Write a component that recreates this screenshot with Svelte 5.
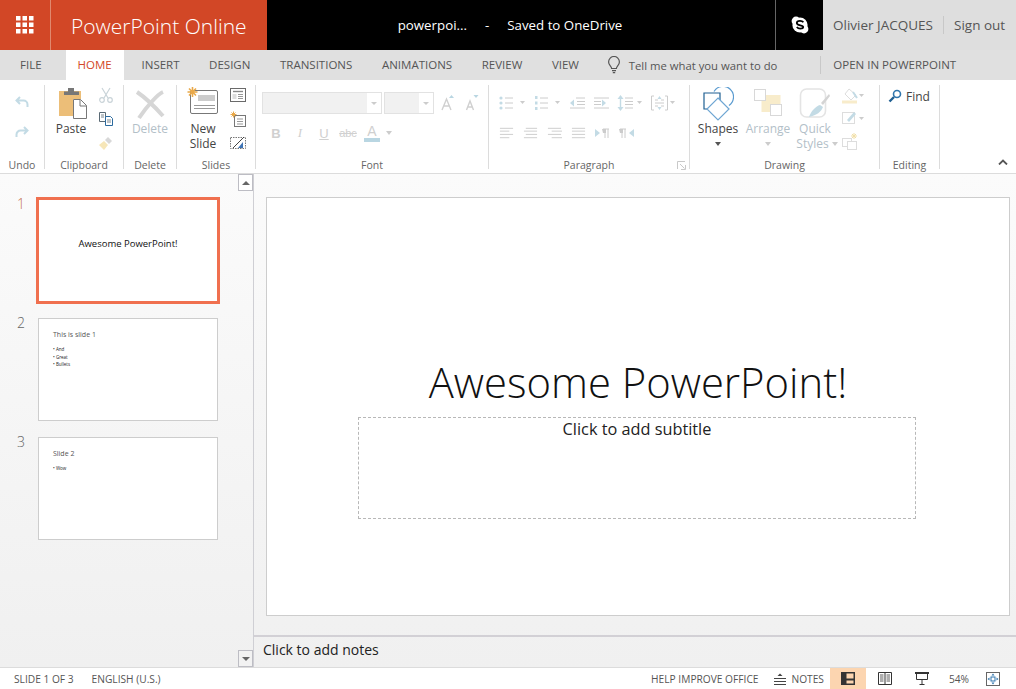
<script>
	const tabs = ['INSERT', 'DESIGN', 'TRANSITIONS', 'ANIMATIONS', 'REVIEW', 'VIEW'];
	const slides = [
		{ n: 1, title: 'Awesome PowerPoint!', bullets: [] },
		{ n: 2, title: 'This is slide 1', bullets: ['And', 'Great', 'Bullets'] },
		{ n: 3, title: 'Slide 2', bullets: ['Wow'] }
	];
	const alignLines = [
		[1, 14, 1, 10, 1, 14, 1, 10],
		[3, 12, 1, 14, 3, 12, 1, 14],
		[1, 14, 5, 14, 1, 14, 5, 14],
		[1, 14, 1, 14, 1, 14, 1, 14]
	];
</script>

<div class="app">
	<header class="topbar">
		<div class="brand">
			<div class="waffle">
				<svg width="18" height="18" viewBox="0 0 18 18" fill="#fff">
					{#each [0, 6.5, 13] as y}
						{#each [0, 6.5, 13] as x}
							<rect {x} {y} width="4.5" height="4.5" />
						{/each}
					{/each}
				</svg>
			</div>
			<div class="appname">PowerPoint Online</div>
		</div>
		<div class="docname">
			<span>powerpoi...</span>
			<span class="dash">-</span>
			<span>Saved to OneDrive</span>
		</div>
		<div class="skype">
			<svg width="18" height="18" viewBox="0 0 18 18">
				<circle cx="5" cy="5" r="4.4" fill="#fff" />
				<circle cx="13" cy="13" r="4.4" fill="#fff" />
				<circle cx="9" cy="9" r="7.6" fill="#fff" />
				<path d="M12.4 6.3C11.6 5.2 10.4 4.8 9 4.8c-1.8 0-3.2.9-3.2 2.3 0 3 6.4 1.6 6.4 4 0 1-1.2 1.6-3 1.6-1.5 0-2.6-.6-3.4-1.7" fill="none" stroke="#000" stroke-width="1.8" />
			</svg>
		</div>
		<div class="user">
			<span>Olivier JACQUES</span>
			<span class="signout">Sign out</span>
		</div>
	</header>

	<nav class="tabs">
		<span class="tab file">FILE</span>
		<span class="tab home">HOME</span>
		{#each tabs as t}
			<span class="tab">{t}</span>
		{/each}
		<span class="tell">
			<svg width="14" height="18" viewBox="0 0 14 18" fill="none" stroke="#555" stroke-width="1.2">
				<path d="M4.6 12.5c0-2.2-3-3.4-3-6.6a5.4 5.4 0 0 1 10.8 0c0 3.2-3 4.4-3 6.6z" />
				<path d="M5 14.6h4M5.8 16.6h2.4" />
			</svg>
			<span>Tell me what you want to do</span>
		</span>
		<span class="tab open">OPEN IN POWERPOINT</span>
	</nav>

	<section class="ribbon">
		<div class="group undo">
			<div class="body col-icons">
				<svg width="16" height="16" viewBox="0 0 16 16" fill="none" stroke="#c3dbe5" stroke-width="2">
					<path d="M6 3 2.500 6.500 6 10M3 6.500h6.500a4 4 0 0 1 4 4V13" />
				</svg>
				<svg width="16" height="16" viewBox="0 0 16 16" fill="none" stroke="#c3dbe5" stroke-width="2">
					<path d="M10 3l3.500 3.500L10 10M13 6.500H6.500a4 4 0 0 0-4 4V13" />
				</svg>
			</div>
			<div class="glabel">Undo</div>
		</div>

		<div class="group clipboard">
			<div class="body">
				<div class="big paste">
					<svg width="32" height="34" viewBox="0 0 32 34">
						<path d="M4 4h22v8h-8v17H4z" fill="#ecbe78" />
						<path d="M9 8V4.500h4V1h6v3.500h5V8z" fill="#777" />
						<path d="M18.500 12.500h7l6 6v13h-13z" fill="#fff" stroke="#777" />
						<path d="M25 12.500v6.500h6.500" fill="none" stroke="#777" />
					</svg>
					<span>Paste</span>
				</div>
				<div class="small-col">
					<svg width="16" height="16" viewBox="0 0 16 16" fill="none" stroke="#c9d3d8" stroke-width="1.200">
						<path d="M4 1l6 10M12 1 6 11" />
						<circle cx="4" cy="13" r="2.300" />
						<circle cx="12" cy="13" r="2.300" />
					</svg>
					<svg width="16" height="16" viewBox="0 0 16 16" fill="#fff" stroke="#5a6a75">
						<path d="M1.500 1.500h6v9h-6z" />
						<path d="M7.500 5.500h5l2 2v7h-7z" stroke="#2b6a9e" />
						<path d="M3 4h3M3 6h3M9 9h4M9 11h4" stroke-width=".8" />
					</svg>
					<svg width="16" height="16" viewBox="0 0 16 16">
						<path d="M1 10l5-4 4 4-4 5z" fill="#f6e6b8" />
						<path d="M7 5l3-3 4 4-3 3z" fill="#d8d8d8" />
					</svg>
				</div>
			</div>
			<div class="glabel">Clipboard</div>
		</div>

		<div class="group delete">
			<div class="body">
				<div class="big dim">
					<svg width="30" height="34" viewBox="0 0 30 34" fill="none" stroke="#d6d6d6" stroke-width="4">
						<path d="M2 5c9 6 18 15 26 24" />
						<path d="M28 5c-5 2-16 14-24 26" />
					</svg>
					<span>Delete</span>
				</div>
			</div>
			<div class="glabel">Delete</div>
		</div>

		<div class="group slidesg">
			<div class="body">
				<div class="big">
					<svg width="32" height="34" viewBox="0 0 32 34">
						<rect x="3.500" y="3.500" width="27" height="23" rx="1.500" fill="#fff" stroke="#777" />
						<rect x="11" y="8" width="17" height="6" fill="#ccc" />
						<path d="M7 18.500h21M7 21.500h21" stroke="#999" />
						<path d="M5.500 0v10M.5 5h10M2 1.500l7 7M9 1.500l-7 7" stroke="#e9a94a" stroke-width="1.600" />
					</svg>
					<span>New</span>
					<span>Slide</span>
				</div>
				<div class="small-col">
					<svg width="16" height="16" viewBox="0 0 16 16" fill="none" stroke="#6a6a6a">
						<rect x=".5" y="1.500" width="15" height="13" fill="#fff" />
						<path d="M3 4.500h10" stroke="#888" stroke-width="1.400" />
						<rect x="2.500" y="7" width="4" height="5" fill="#ddd" stroke="none" />
						<path d="M8 7.500h5M8 9.500h5M8 11.500h5" stroke="#999" />
					</svg>
					<svg width="16" height="16" viewBox="0 0 16 16" fill="none">
						<rect x="4.500" y="4.500" width="11" height="11" fill="#fff" stroke="#777" />
						<path d="M7 8h6M7 10.500h6M7 13h6" stroke="#999" />
						<path d="M3.500 .5v6M.5 3.500h6M1.500 1.500l4 4M5.500 1.500l-4 4" stroke="#e9a94a" />
					</svg>
					<svg width="16" height="16" viewBox="0 0 16 16" fill="none">
						<rect x=".5" y="2.500" width="15" height="11" stroke="#777" stroke-dasharray="1.500 1" />
						<path d="M3 13 14 2" stroke="#444" />
						<path d="M8 13l5-6v6z" fill="#3f74b5" />
					</svg>
				</div>
			</div>
			<div class="glabel">Slides</div>
		</div>

		<div class="group font">
			<div class="body rows">
				<div class="row one">
					<div class="combo name"><i></i><b><u></u></b></div>
					<div class="combo size"><i></i><b><u></u></b></div>
					<svg class="grow" width="14" height="16" viewBox="0 0 14 16" fill="none">
						<path d="M1 15 5.500 4 10 15M3 11h5" stroke="#d0d0d0" stroke-width="1.400" />
						<path d="M8 3l2.500-3L13 3z" fill="#b9d6e2" />
					</svg>
					<svg class="shrink" width="14" height="16" viewBox="0 0 14 16" fill="none">
						<path d="M1.500 15 5 6l3.500 9M3 12h4" stroke="#d0d0d0" stroke-width="1.400" />
						<path d="M8.500 0h5L11 3z" fill="#b9d6e2" />
					</svg>
				</div>
				<div class="row two">
					<span class="fmt bold">B</span>
					<span class="fmt ital">I</span>
					<span class="fmt under">U</span>
					<span class="fmt strike">abc</span>
					<span class="fontcolor"><span>A</span><u></u></span>
					<span class="caret dimcaret"></span>
				</div>
			</div>
			<div class="glabel">Font</div>
		</div>

		<div class="group para">
			<div class="body rows">
				<div class="row p1">
					<svg width="27" height="16" viewBox="0 0 27 16">
						<g fill="#c3dbe5"><circle cx="2" cy="3" r="1.600" /><circle cx="2" cy="8" r="1.600" /><circle cx="2" cy="13" r="1.600" /></g>
						<path d="M6 3h8M6 8h8M6 13h8" stroke="#ccc" />
						<path d="M21 6h5l-2.500 3z" fill="#ccc" />
					</svg>
					<svg width="27" height="16" viewBox="0 0 27 16">
						<g fill="#c3dbe5"><rect x="1" y="1" width="2.500" height="3" /><rect x="1" y="6.500" width="2.500" height="3" /><rect x="1" y="12" width="2.500" height="3" /></g>
						<path d="M6 3h8M6 8h8M6 13h8" stroke="#ccc" />
						<path d="M21 6h5l-2.500 3z" fill="#ccc" />
					</svg>
					<svg width="16" height="16" viewBox="0 0 16 16">
						<path d="M7 3h9M8 6.500h8M8 9.500h8M1 13h15" stroke="#ccc" />
						<path d="M1 8l4-3.500v7z" fill="#c3dbe5" />
					</svg>
					<svg width="16" height="16" viewBox="0 0 16 16">
						<path d="M1 3h15M1 6.500h7M1 9.500h7M1 13h15" stroke="#ccc" />
						<path d="M13 8 9 4.500v7z" fill="#c3dbe5" />
					</svg>
					<svg width="26" height="16" viewBox="0 0 26 16">
						<path d="M3.500 3v10" stroke="#c3dbe5" stroke-width="1.400" />
						<path d="M.5 4l3-4 3 4zM.5 12l3 4 3-4z" fill="#c3dbe5" />
						<path d="M8 3h8M8 6.500h8M8 9.500h8M8 13h8" stroke="#ccc" />
						<path d="M20 6h5l-2.500 3z" fill="#ccc" />
					</svg>
					<svg width="25" height="16" viewBox="0 0 25 16" fill="none">
						<path d="M3 1H.5v14H3M14 1h2.500v14H14" stroke="#ccc" />
						<path d="M4 5h3M10 5h3M4 8h9M4 11h3M10 11h3" stroke="#ccc" />
						<path d="M6.500 4l2-3 2 3zM6.500 12l2 3 2-3z" fill="#c3dbe5" />
						<path d="M19 6h5l-2.500 3z" fill="#ccc" />
					</svg>
				</div>
				<div class="row p2">
					{#each alignLines as lines}
						<svg width="15" height="12" viewBox="0 0 16 12">
							{#each [1, 4, 7.5, 11] as y, i}
								<path d="M{lines[i * 2]} {y}h{lines[i * 2 + 1]}" stroke="#ccc" />
							{/each}
						</svg>
					{/each}
					<svg width="15" height="12" viewBox="0 0 15 12">
						<path d="M0 2l5 4-5 4z" fill="#c3dbe5" />
						<path d="M8 2h6M10 2v9M13 2v9" stroke="#ccc" />
						<path d="M7 2h4v4H8z" fill="#ccc" />
					</svg>
					<svg width="15" height="12" viewBox="0 0 15 12">
						<path d="M15 2l-5 4 5 4z" fill="#c3dbe5" />
						<path d="M1 2h6M3 2v9M6 2v9" stroke="#ccc" />
						<path d="M0 2h4v4H1z" fill="#ccc" />
					</svg>
				</div>
			</div>
			<div class="glabel launch">
				Paragraph
				<svg width="9" height="9" viewBox="0 0 9 9" fill="none" stroke="#c9c9c9">
					<path d="M.5 8V.5H8M3 3l4.500 4.500M4 8.500h4.500V4" />
				</svg>
			</div>
		</div>

		<div class="group drawing">
			<div class="body">
				<div class="big shapes">
					<svg width="32" height="34" viewBox="0 0 32 34" fill="none" stroke="#2e75ad" stroke-width="1.200">
						<path d="M2 6h16v16H2z" stroke="#1f5f92" />
						<path d="M12 4.500a10.500 10.500 0 1 1 15 14" stroke="#5a9bd0" />
						<path d="M16 11l11 11-11 11L5 22z" fill="#fff" stroke="#6fa6d3" />
					</svg>
					<span>Shapes</span>
					<span class="caret"></span>
				</div>
				<div class="big dim arrange">
					<svg width="30" height="34" viewBox="0 0 30 34">
						<rect x="8.500" y="8" width="19" height="17" fill="#f8eccb" />
						<rect x="1.500" y="2.500" width="11" height="11" fill="#fff" stroke="#d8d8d8" />
						<rect x="17.500" y="17.500" width="11" height="11" fill="#fff" stroke="#d8d8d8" />
					</svg>
					<span>Arrange</span>
					<span class="caret light"></span>
				</div>
				<div class="big dim quick">
					<svg width="32" height="34" viewBox="0 0 32 34" fill="none">
						<rect x="1.500" y="2" width="25" height="28" rx="6" stroke="#e4e4e4" stroke-width="1.600" />
						<path d="M22 16 30 7l1 2-7 9z" fill="#d4d4d4" />
						<path d="M10 30c2-6 7-11 11-12l3 2c-2 5-6 8-14 10z" fill="#c3dbe5" />
					</svg>
					<span>Quick</span>
					<span>Styles <em class="caret light"></em></span>
				</div>
				<div class="small-col wide">
					<svg width="24" height="16" viewBox="0 0 24 16" fill="none">
						<path d="M8 1l7 6-5 5-6-6z" stroke="#ddd" fill="#fff" />
						<path d="M12 4l4 6" stroke="#c3dbe5" stroke-width="2" />
						<rect x="1" y="12.500" width="15" height="3" fill="#f8eccb" />
						<path d="M18 6h5l-2.500 3z" fill="#ccc" />
					</svg>
					<svg width="24" height="16" viewBox="0 0 24 16" fill="none">
						<rect x="1.500" y="2.500" width="12" height="11" stroke="#ddd" />
						<path d="M6 10l7-8 2 2-7 8z" fill="#c3dbe5" />
						<path d="M18 7h5l-2.500 3z" fill="#ccc" />
					</svg>
					<svg width="24" height="18" viewBox="0 0 24 18" fill="none">
						<rect x="1.500" y="6.500" width="9" height="8" stroke="#ddd" />
						<rect x="6.500" y="9.500" width="9" height="8" fill="#fff" stroke="#ddd" />
						<path d="M13 1v6M10 4h6M11 2l4 4M15 2l-4 4" stroke="#f1dfa8" />
					</svg>
				</div>
			</div>
			<div class="glabel">Drawing</div>
		</div>

		<div class="group editing">
			<div class="body">
				<div class="find">
					<svg width="14" height="14" viewBox="0 0 14 14" fill="none">
						<circle cx="9" cy="5" r="3.500" stroke="#2e75ad" stroke-width="1.600" />
						<path d="M6 8 1.500 12.500" stroke="#1f5f92" stroke-width="2.400" />
					</svg>
					<span>Find</span>
				</div>
			</div>
			<div class="glabel">Editing</div>
		</div>

		<div class="collapse">
			<svg width="10" height="6" viewBox="0 0 10 6" fill="none" stroke="#555" stroke-width="1.800">
				<path d="M1 5.500l4-4 4 4" />
			</svg>
		</div>
	</section>

	<main class="workspace">
		<aside class="sidebar">
			<div class="thumbs">
				{#each slides as s}
					<div class="item">
						<span class="num" class:current={s.n === 1}>{s.n}</span>
						<div class="thumb" class:selected={s.n === 1}>
							<div class="ttitle">{s.title}</div>
							{#if s.bullets.length}
								<ul>
									{#each s.bullets as b}
										<li>{b}</li>
									{/each}
								</ul>
							{/if}
						</div>
					</div>
				{/each}
			</div>
			<div class="scroll">
				<button class="sbtn" aria-label="Up"><span class="tri up"></span></button>
				<button class="sbtn" aria-label="Down"><span class="tri"></span></button>
			</div>
		</aside>

		<div class="editor">
			<div class="stage">
				<div class="slide">
					<h1>Awesome PowerPoint!</h1>
					<div class="subtitle">Click to add subtitle</div>
				</div>
			</div>
			<div class="notes">Click to add notes</div>
		</div>
	</main>

	<footer class="status">
		<span class="s-slide">SLIDE 1 OF 3</span>
		<span class="s-lang">ENGLISH (U.S.)</span>
		<span class="s-help">HELP IMPROVE OFFICE</span>
		<span class="s-notes">
			<svg width="12" height="12" viewBox="0 0 12 12" fill="none" stroke="#444">
				<path d="M0 5.500h12M0 8.500h12M0 11.500h12" />
				<path d="M3.500 3 6 .5 8.500 3z" fill="#444" stroke="none" />
			</svg>
			NOTES
		</span>
		<span class="view active">
			<svg width="14" height="13" viewBox="0 0 14 13">
				<path d="M0 0h14v13H0z" fill="#333" />
				<path d="M5.500 1.500h7v5h-7zM5.500 8.500h7v3h-7z" fill="#fcd5b0" />
			</svg>
		</span>
		<span class="view">
			<svg width="14" height="13" viewBox="0 0 14 13" fill="none" stroke="#333">
				<path d="M.5.500h13v12H.500zM7 .5v12" />
				<path d="M2 3h3.500M2 5h3.500M2 7h3.500M2 9h3.500M8.500 3H12M8.500 5H12M8.500 7H12M8.500 9H12" stroke-width=".8" />
			</svg>
		</span>
		<span class="view">
			<svg width="14" height="13" viewBox="0 0 14 13" fill="none" stroke="#333">
				<path d="M0 1h14" stroke-width="2" />
				<path d="M1.500 1.500v6h11v-6M7 7.500V12M4.500 12.500h5" />
			</svg>
		</span>
		<span class="zoom">54%</span>
		<span class="fit">
			<svg width="14" height="14" viewBox="0 0 14 14" fill="none">
				<rect x=".5" y=".5" width="13" height="13" stroke="#666" />
				<rect x="5" y="5" width="4" height="4" stroke="#2e75ad" />
				<path d="M7 1.500 5.500 3.500h3zM7 12.500l-1.500-2h3zM1.500 7l2-1.500v3zM12.500 7l-2-1.500v3z" fill="#2e75ad" />
			</svg>
		</span>
	</footer>
</div>

<style>
	:global(body) {
		margin: 0;
		background: #fff;
	}

	.app {
		width: 1016px;
		height: 689px;
		overflow: hidden;
		display: flex;
		flex-direction: column;
		font-family: "Open Sans", "Liberation Sans", sans-serif;
		color: #444;
	}

	svg {
		display: block;
		flex: none;
	}

	/* top bar */
	.topbar {
		display: flex;
		height: 50px;
		background: #000;
		color: #fff;
		flex: none;
	}

	.brand {
		display: flex;
		width: 267px;
		background: #d24726;
	}

	.waffle {
		width: 50px;
		display: flex;
		align-items: center;
		justify-content: center;
		border-right: 1px solid #e0896f;
	}

	.appname {
		padding-left: 20px;
		font-size: 21px;
		font-weight: 300;
		line-height: 52px;
	}

	.docname {
		flex: 1;
		display: flex;
		align-items: center;
		justify-content: center;
		gap: 18px;
		padding-right: 22px;
		font-size: 13.3px;
	}

	.skype {
		width: 48px;
		border-left: 1px solid #666;
		box-sizing: border-box;
		display: flex;
		align-items: center;
		justify-content: center;
	}

	.user {
		width: 193px;
		background: #dedede;
		color: #555;
		display: flex;
		align-items: center;
		padding-left: 10px;
		font-size: 13.5px;
		box-sizing: border-box;
	}

	.signout {
		margin-left: 10px;
		padding-left: 10px;
		border-left: 1px solid #c8c8c8;
		line-height: 18px;
	}

	/* tabs */
	.tabs {
		display: flex;
		align-items: center;
		height: 30px;
		background: #e0e0e0;
		font-size: 11.5px;
		flex: none;
		color: #555;
	}

	.tab {
		padding: 0 14.8px;
		line-height: 30px;
	}

	.file {
		padding: 0 24px 0 20px;
	}

	.home {
		background: #fff;
		color: #d24726;
		padding: 0 12px;
		margin-right: 3px;
	}

	.tell {
		display: flex;
		align-items: center;
		gap: 8px;
		margin-left: 13px;
		padding-right: 43px;
		border-right: 1px solid #c8c8c8;
		height: 18px;
		font-size: 11.3px;
	}

	.open {
		padding-left: 12px;
	}

	/* ribbon */
	.ribbon {
		display: flex;
		height: 94px;
		box-sizing: border-box;
		padding-top: 5px;
		background: #fff;
		border-bottom: 1px solid #dcdcdc;
		flex: none;
		font-size: 12px;
	}

	.group {
		display: flex;
		flex-direction: column;
		height: 84px;
		box-sizing: border-box;
		border-right: 1px solid #dcdcdc;
	}

	.undo { width: 45px; }
	.clipboard { width: 79px; }
	.delete { width: 53px; }
	.slidesg { width: 79px; }
	.font { width: 233px; }
	.para { width: 201px; }
	.drawing { width: 190px; }
	.editing { width: 60px; }

	.body {
		flex: 1;
		display: flex;
		min-height: 0;
	}

	.glabel {
		height: 14px;
		margin-bottom: -3px;
		text-align: center;
		font-size: 10.5px;
		line-height: 14px;
		color: #666;
		position: relative;
	}

	.launch svg {
		position: absolute;
		right: 3px;
		top: 3px;
	}

	.col-icons {
		flex-direction: column;
		align-items: center;
		gap: 14px;
		padding-top: 9px;
		padding-right: 1px;
	}

	.big {
		display: flex;
		flex-direction: column;
		align-items: center;
		width: 52px;
		padding-top: 2px;
		font-size: 12px;
		line-height: 15px;
		flex: none;
		color: #444;
	}

	.dim,
	.dim span {
		color: #b3c0c8;
	}

	.small-col {
		display: flex;
		flex-direction: column;
		align-items: center;
		width: 18px;
		gap: 8px;
		padding-top: 2px;
	}

	.rows {
		flex-direction: column;
		padding-top: 7px;
	}

	.row {
		display: flex;
		align-items: center;
	}

	.one {
		height: 22px;
		padding-left: 6px;
	}

	.combo {
		display: flex;
		height: 22px;
		box-sizing: border-box;
		border: 1px solid #e2e2e2;
		margin-right: 2px;
	}

	.combo i {
		flex: 1;
		background: #f1f1f1;
	}

	.combo b {
		display: flex;
		align-items: center;
		justify-content: center;
		background: #fff;
		width: 14px;
	}

	.combo u {
		border: 3px solid transparent;
		border-top: 3px solid #ccc;
		margin-top: 3px;
	}

	.name {
		width: 120px;
	}

	.size {
		width: 50px;
	}

	.grow {
		margin-left: 5px;
	}

	.shrink {
		margin-left: 10px;
	}

	.two {
		height: 20px;
		margin-top: 9px;
		padding-left: 8px;
		font-family: "Liberation Sans", sans-serif;
		color: #d0d0d0;
		font-size: 13px;
	}

	.fmt {
		width: 24px;
		text-align: center;
	}

	.bold {
		font-weight: 700;
	}

	.ital {
		font-style: italic;
		font-family: "Liberation Serif", serif;
	}

	.under {
		text-decoration: underline;
	}

	.strike {
		text-decoration: line-through;
		font-size: 11px;
	}

	.fontcolor {
		display: flex;
		flex-direction: column;
		align-items: center;
		width: 16px;
		margin-left: 4px;
		line-height: 13px;
		font-size: 14px;
	}

	.fontcolor u {
		display: block;
		width: 16px;
		height: 4px;
		background: #b9d6e2;
	}

	.caret {
		display: block;
		border: 3px solid transparent;
		border-top: 4px solid #555;
		border-bottom: 0;
		width: 0;
		height: 0;
		margin-top: 6px;
	}

	.caret.light,
	.dimcaret {
		border-top-color: #ccc;
	}

	.dimcaret {
		margin: 0 0 0 6px;
	}

	.p1 {
		height: 22px;
		gap: 8px;
		padding-left: 10px;
	}

	.p2 {
		height: 20px;
		margin-top: 9px;
		padding-left: 10px;
		gap: 9px;
	}

	.drawing .body {
		padding-left: 3px;
	}

	.drawing .big {
		width: 50px;
	}

	.shapes span {
		color: #444;
	}

	.drawing .quick {
		width: 44px;
	}

	.quick span:last-child {
		display: flex;
		align-items: center;
		gap: 3px;
		margin-left: 4px;
	}

	.quick em {
		margin: 1px 0 0;
	}

	.wide {
		width: 28px;
		gap: 6px;
		padding-top: 3px;
		padding-left: 2px;
	}

	.find {
		display: flex;
		align-items: center;
		gap: 4px;
		height: 14px;
		margin: 4px 0 0 8px;
		font-size: 12px;
		color: #444;
	}

	.collapse {
		margin-left: auto;
		padding: 74px 8px 0 0;
	}

	/* workspace */
	.workspace {
		flex: 1;
		display: flex;
		min-height: 0;
		background: linear-gradient(#fbfbfb, #f0f0f0);
	}

	.sidebar {
		display: flex;
		width: 254px;
		box-sizing: border-box;
		border-right: 1px solid #cfcfd4;
	}

	.thumbs {
		width: 238px;
		padding-top: 23px;
		display: flex;
		flex-direction: column;
		gap: 12px;
	}

	.item {
		display: flex;
		height: 107px;
		align-items: flex-start;
	}

	.num {
		width: 36px;
		text-align: center;
		padding-left: 6px;
		box-sizing: border-box;
		font-size: 14px;
		font-weight: 300;
		line-height: 14px;
		color: #666;
	}

	.num.current {
		color: #c4704f;
	}

	.thumb {
		box-sizing: border-box;
		width: 180px;
		height: 103px;
		margin: 2px;
		background: #fff;
		border: 1px solid #cdcdcd;
		padding: 11px 14px;
		color: #555;
		font-size: 7px;
	}

	.thumb.selected {
		width: 184px;
		height: 107px;
		margin: 0;
		border: 3px solid #f0704f;
		padding: 0 0 14px;
		display: flex;
		align-items: center;
		justify-content: center;
		color: #111;
		font-size: 9.5px;
	}

	.thumb ul {
		list-style: none;
		margin: 7px 0 0;
		padding: 0;
		font-size: 4.5px;
		line-height: 7.5px;
		color: #222;
	}

	.thumb li::before {
		content: "• ";
	}

	.scroll {
		width: 15px;
		display: flex;
		flex-direction: column;
		justify-content: space-between;
	}

	.sbtn {
		display: flex;
		align-items: center;
		justify-content: center;
		width: 15px;
		height: 17px;
		padding: 0;
		border: 1px solid #bdbdc4;
		background: #fff;
		box-sizing: border-box;
	}

	.sbtn:last-child {
		background: #f2f2f2;
	}

	.tri {
		border: 4px solid transparent;
		border-top: 4px solid #666;
		border-bottom: 0;
	}

	.tri.up {
		border-top: 0;
		border-bottom: 4px solid #666;
	}

	.editor {
		flex: 1;
		display: flex;
		flex-direction: column;
	}

	.stage {
		height: 463px;
		box-sizing: border-box;
		padding: 23px 6px 0 12px;
		border-bottom: 2px solid #d2d0d5;
	}

	.slide {
		box-sizing: border-box;
		height: 419px;
		background: #fff;
		border: 1px solid #cdcdcd;
		padding-top: 158px;
	}

	h1 {
		margin: 0;
		text-align: center;
		font-size: 41.8px;
		font-weight: 300;
		line-height: 52px;
		color: #111;
	}

	.subtitle {
		box-sizing: border-box;
		width: 558px;
		height: 102px;
		margin: 9px 0 0 91px;
		border: 1px dashed #b8b8b8;
		text-align: center;
		font-size: 16.3px;
		line-height: 22px;
		color: #222;
	}

	.notes {
		flex: 1;
		padding-left: 9px;
		font-size: 14px;
		line-height: 26px;
		color: #222;
	}

	/* status bar */
	.status {
		display: flex;
		align-items: center;
		height: 22px;
		flex: none;
		box-sizing: border-box;
		border-top: 1px solid #dcdcdc;
		background: #fff;
		font-size: 10.2px;
		color: #555;
	}

	.s-slide {
		margin-left: 14px;
	}

	.s-lang {
		margin-left: 18px;
	}

	.s-help {
		margin-left: auto;
	}

	.s-notes {
		display: flex;
		align-items: center;
		gap: 5px;
		margin-left: 16px;
	}

	.view {
		display: flex;
		align-items: center;
		justify-content: center;
		width: 36px;
		height: 21px;
		margin-right: 1px;
	}

	.view.active {
		background: #fcd5b0;
		margin-left: 6px;
	}

	.zoom {
		margin-left: 8px;
	}

	.fit {
		margin: 0 16px 0 17px;
	}
</style>
